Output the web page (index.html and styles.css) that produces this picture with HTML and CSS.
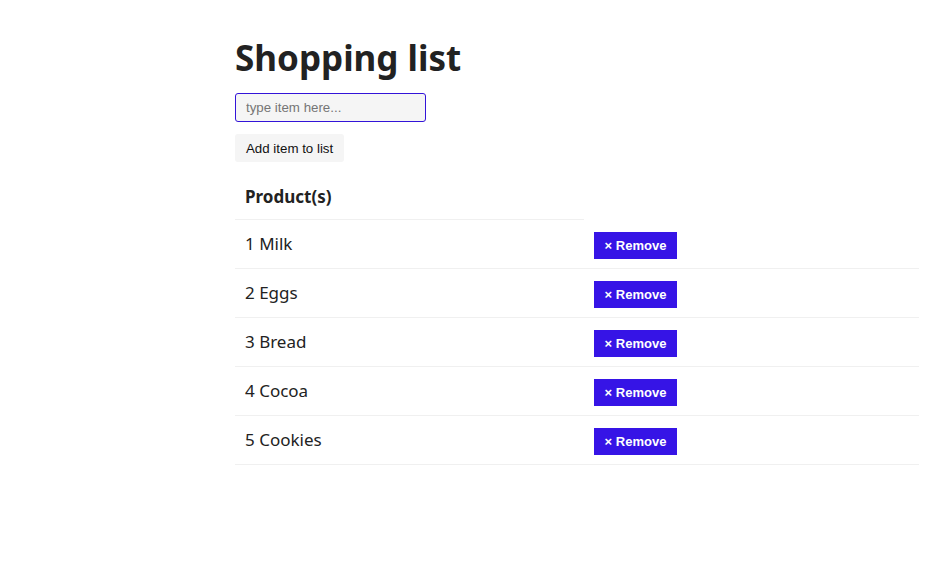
FILE: index.html
```html
<!DOCTYPE html>
<html>
<head>
<meta charset="utf-8">
<link rel="stylesheet" href="styles.css">
</head>
<body>
<main class="app">
  <h1 class="title">Shopping list</h1>
  <form class="add-form">
    <input class="item-input" type="text" placeholder="type item here...">
    <button class="add-btn" type="button">Add item to list</button>
  </form>
  <table class="list">
    <thead>
      <tr><th class="head-cell">Product(s)</th><th class="head-empty"></th></tr>
    </thead>
    <tbody>
      <tr><td class="name">1 Milk</td><td class="action"><button class="remove">× Remove</button></td></tr>
      <tr><td class="name">2 Eggs</td><td class="action"><button class="remove">× Remove</button></td></tr>
      <tr><td class="name">3 Bread</td><td class="action"><button class="remove">× Remove</button></td></tr>
      <tr><td class="name">4 Cocoa</td><td class="action"><button class="remove">× Remove</button></td></tr>
      <tr><td class="name">5 Cookies</td><td class="action"><button class="remove">× Remove</button></td></tr>
    </tbody>
  </table>
</main>
</body>
</html>
```
FILE: styles.css
```css
html, body {
  margin: 0;
  padding: 0;
  background: #fff;
}
body {
  font-family: "Noto Sans", "Open Sans", sans-serif;
  color: #212121;
}
.app {
  margin-left: 235px;
  width: 684px;
  padding-top: 31px;
}
.title {
  margin: 0;
  font-size: 35px;
  font-weight: 700;
  line-height: 54px;
  color: #222;
}
.add-form {
  display: flex;
  flex-direction: column;
  align-items: flex-start;
  gap: 12px;
  margin-top: 8px;
}
.item-input {
  box-sizing: border-box;
  width: 191px;
  height: 29px;
  margin: 0;
  padding: 0 10px;
  border: 1px solid #3314d8;
  border-radius: 3px;
  background: #f5f5f5;
  font-family: "Liberation Sans", Arial, sans-serif;
  font-size: 13.3px;
  color: #333;
  outline: none;
}
.item-input::placeholder {
  color: #757575;
}
.add-btn {
  box-sizing: border-box;
  height: 28px;
  margin: 0;
  padding: 0 11px;
  border: none;
  border-radius: 3px;
  background: #f5f5f5;
  font-family: "Liberation Sans", Arial, sans-serif;
  font-size: 13.3px;
  color: #111;
}
.list {
  margin-top: 12px;
  width: 684px;
  border-collapse: collapse;
}
.head-cell {
  width: 349px;
  box-sizing: border-box;
  height: 45px;
  padding: 0 10px;
  text-align: left;
  font-size: 17px;
  font-weight: 700;
  border-bottom: 1px solid #f0f0f0;
  color: #222;
}
.head-empty {
  border-bottom: 1px solid transparent;
  padding: 0;
}
tbody tr {
  border-bottom: 1px solid #f0f0f0;
}
.name {
  height: 48px;
  padding: 0 10px;
  font-size: 17px;
  color: #222;
  vertical-align: middle;
}
.action {
  padding: 3px 10px 0;
  vertical-align: middle;
}
.remove {
  display: block;
  width: 83px;
  height: 27px;
  margin: 0;
  padding: 0;
  border: none;
  background: #3614e6;
  color: #fff;
  font-family: "Liberation Sans", Arial, sans-serif;
  font-size: 13px;
  font-weight: 700;
}
```
